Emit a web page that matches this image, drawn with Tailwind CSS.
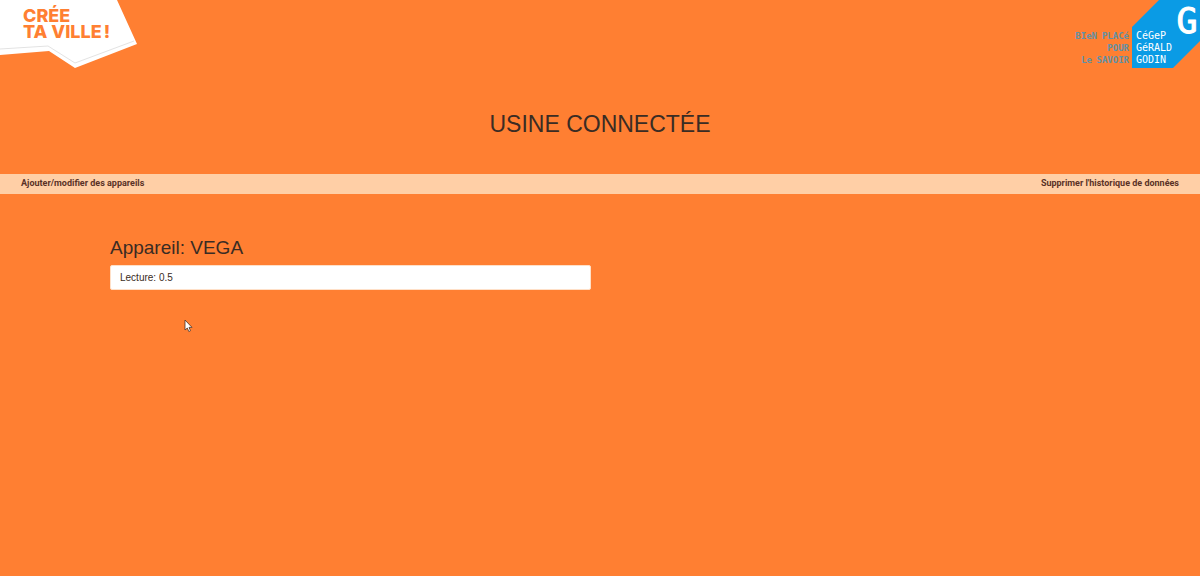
<!DOCTYPE html>
<html lang="fr">
<head>
<meta charset="utf-8">
<meta name="viewport" content="width=device-width, initial-scale=1">
<title>Usine connectée</title>
<script src="https://cdn.jsdelivr.net/npm/@tailwindcss/browser@4"></script>
</head>
<body class="min-h-screen bg-[#ff7f32] font-['Liberation_Sans',Arial,sans-serif] text-[#3a2c24]">
<header class="flex items-start justify-between">
  <svg class="h-[70px] w-[140px]" viewBox="0 0 140 70" role="img" aria-label="Crée ta ville !">
    <path d="M0 0H117L137 44L75 68L49 51L0 55Z" fill="#fff"/>
    <path d="M0 49L48 46L75 63L134 41" fill="none" stroke="#e3e3e3"/>
    <g class="font-['Inter',sans-serif] text-[18px] font-extrabold" fill="#ff7f32">
      <text x="23" y="22">CRÉE</text>
      <text x="23" y="38">TA VILLE<tspan dx="2">!</tspan></text>
    </g>
  </svg>
  <svg class="h-[70px] w-[130px]" viewBox="0 0 130 70" role="img" aria-label="Cégep Gérald-Godin, bien placé pour le savoir">
    <path d="M62 27L89 0H130V41L103 68H62Z" fill="#0a9be5"/>
    <g class="font-['DejaVu_Sans_Mono',monospace] text-[9px] font-bold" fill="#6291a6" text-anchor="end">
      <text x="27" y="39">BIeN</text>
      <text x="59" y="39">PLACé</text>
      <text x="59" y="51">POUR</text>
      <text x="22" y="63">Le</text>
      <text x="59" y="63">SAVOIR</text>
    </g>
    <g class="font-['DejaVu_Sans_Mono',monospace] text-[10px]" fill="#fff">
      <text x="66" y="39">CéGeP</text>
      <text x="66" y="51">GéRALD</text>
      <text x="66" y="63">GODIN</text>
    </g>
    <text class="font-['DejaVu_Sans_Mono',monospace] text-[35px]" x="117" y="33" text-anchor="middle" fill="#fff" stroke="#fff" stroke-linejoin="round">G</text>
  </svg>
</header>
<h1 class="mt-9 text-center text-[23px] leading-9">USINE CONNECTÉE</h1>
<nav class="mt-8 flex h-5 items-center justify-between bg-[#ffcfa6] px-[21px] font-['Roboto',sans-serif] text-[9px] font-bold text-[#5a3226]">
  <a href="#appareils">Ajouter/modifier des appareils</a>
  <a href="#historique">Supprimer l'historique de données</a>
</nav>
<main class="mx-auto mt-10 grid max-w-[980px] grid-cols-2">
  <section>
    <h2 class="text-[19px] leading-7">Appareil: VEGA</h2>
    <ul class="mt-[3px] mr-[9px] rounded-xs border border-[#ffe0c8] bg-white px-[9px] text-[10px] leading-[23px]">
      <li>Lecture: 0.5</li>
    </ul>
  </section>
</main>
<svg class="pointer-events-none absolute top-[319px] left-[184px] h-[14px] w-[9px]" viewBox="0 0 9 14" aria-hidden="true">
  <path d="M1 1V11L3.3 9L4.8 12.5L6.5 11.7L5 8.4H8Z" fill="#fff" stroke="#4a3328" stroke-width=".8"/>
</svg>
</body>
</html>
